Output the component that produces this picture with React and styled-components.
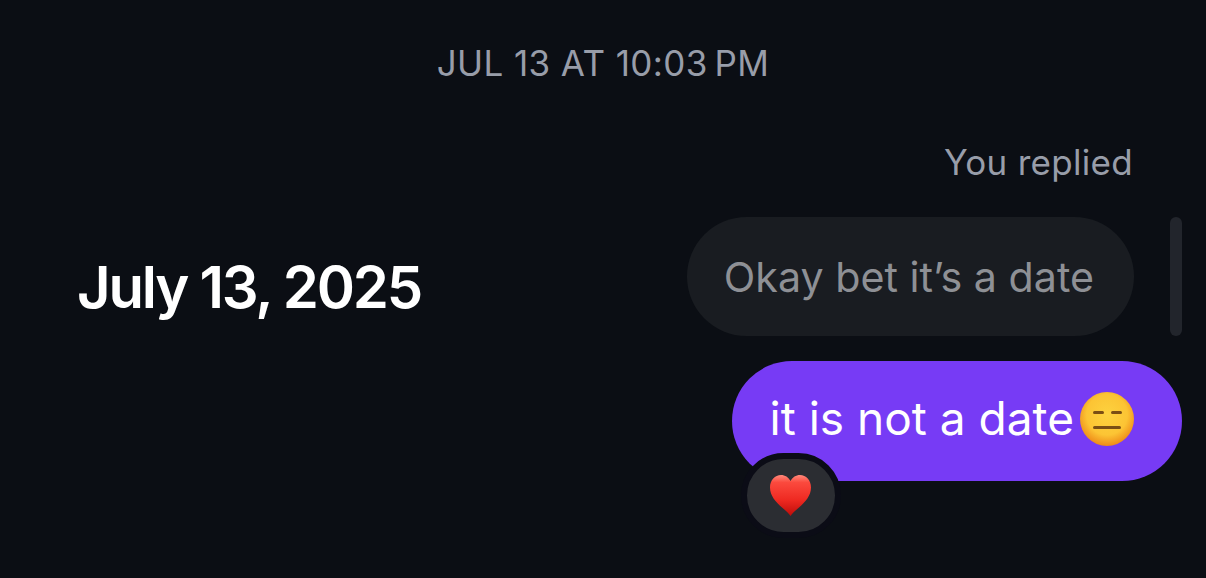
import styled, { createGlobalStyle } from "styled-components";

const GlobalStyle = createGlobalStyle`
  html, body {
    margin: 0;
    padding: 0;
    background: #0b0e14;
  }
  body {
    font-family: "Inter", "Liberation Sans", sans-serif;
    -webkit-font-smoothing: antialiased;
  }
`;

const Page = styled.div`
  width: 1206px;
  height: 578px;
  overflow: hidden;
  background: #0b0e14;
  display: flex;
  flex-direction: column;
  padding: 43px 24px 0 77px;
  box-sizing: border-box;
`;

const Timestamp = styled.div`
  margin-left: -53px;
  text-align: center;
  font-size: 35px;
  line-height: 41px;
  letter-spacing: 0.4px;
  color: #989da9;
`;

const RepliedLabel = styled.div`
  margin-top: 58px;
  padding-right: 49px;
  text-align: right;
  font-size: 35px;
  line-height: 40px;
  letter-spacing: 0.3px;
  color: #989da9;
`;

const QuotedRow = styled.div`
  margin-top: 35px;
  display: flex;
  align-items: center;
  justify-content: space-between;
`;

const DateHeading = styled.h1`
  margin: 21px 0 0;
  font-size: 58px;
  line-height: 64px;
  font-weight: 600;
  letter-spacing: -2.2px;
  color: #ffffff;
`;

const QuotedSide = styled.div`
  display: flex;
  align-items: stretch;
  gap: 36px;
`;

const Bubble = styled.div`
  box-sizing: border-box;
  border-radius: 60px;
  display: flex;
  align-items: center;
  white-space: nowrap;
  height: ${(p) => (p.$mine ? "120px" : "119px")};
  background: ${(p) => (p.$mine ? "#773bf5" : "#191c21")};
  color: ${(p) => (p.$mine ? "#ffffff" : "#8e9095")};
  font-size: ${(p) => (p.$mine ? "46px" : "41.2px")};
  padding: ${(p) => (p.$mine ? "0 48px 6px 38px" : "0 40px 0 37px")};
`;

const ScrollThumb = styled.div`
  width: 12px;
  border-radius: 6px;
  background: #22252c;
`;

const OutgoingRow = styled.div`
  margin-top: 25px;
  display: flex;
  justify-content: flex-end;
`;

const OutgoingWrap = styled.div`
  position: relative;
`;

const Reaction = styled.div`
  position: absolute;
  left: 9px;
  top: 92px;
  width: 100px;
  height: 85px;
  box-sizing: border-box;
  border: 6px solid #0b0c16;
  border-radius: 43px;
  background: #2b2d32;
  display: flex;
  align-items: center;
  justify-content: center;
`;

const FaceIcon = styled.svg`
  flex-shrink: 0;
  margin: 2px 0 0 6px;
`;

const Expressionless = () => (
  <FaceIcon width="54" height="54" viewBox="0 0 54 54">
    <defs>
      <radialGradient id="faceFill" cx="50%" cy="42%" r="58%">
        <stop offset="0%" stopColor="#fdd23f" />
        <stop offset="65%" stopColor="#fcc434" />
        <stop offset="100%" stopColor="#ee8a18" />
      </radialGradient>
    </defs>
    <circle cx="27" cy="27" r="27" fill="url(#faceFill)" />
    <rect x="13" y="19" width="11" height="3" rx="1.5" fill="#7a4e14" />
    <rect x="31" y="19" width="11" height="3" rx="1.5" fill="#7a4e14" />
    <rect x="13" y="34" width="28" height="3" rx="1.5" fill="#7a4e14" />
  </FaceIcon>
);

const Heart = () => (
  <svg width="41" height="41" viewBox="0 0 41 41">
    <defs>
      <linearGradient id="heartFill" x1="0" y1="0" x2="0" y2="1">
        <stop offset="0%" stopColor="#ff8a7c" />
        <stop offset="18%" stopColor="#fb4a3e" />
        <stop offset="60%" stopColor="#ef2a22" />
        <stop offset="100%" stopColor="#bd0d0a" />
      </linearGradient>
    </defs>
    <path
      d="M20.5 41C19 38.5 16 36 12 32.5 6 27 0 21 0 12.5 0 5 5 0 11 0 15 0 18.5 2.2 20.5 6 22.5 2.2 26 0 30 0 36 0 41 5 41 12.5 41 21 35 27 29 32.5 25 36 22 38.5 20.5 41Z"
      fill="url(#heartFill)"
    />
  </svg>
);

export default function App() {
  return (
    <>
      <GlobalStyle />
      <Page>
        <Timestamp>JUL 13 AT 10:03{"\u202f"}PM</Timestamp>
        <RepliedLabel>You replied</RepliedLabel>
        <QuotedRow>
          <DateHeading>July 13, 2025</DateHeading>
          <QuotedSide>
            <Bubble>Okay bet it’s a date</Bubble>
            <ScrollThumb />
          </QuotedSide>
        </QuotedRow>
        <OutgoingRow>
          <OutgoingWrap>
            <Bubble $mine>
              it is not a date
              <Expressionless />
            </Bubble>
            <Reaction>
              <Heart />
            </Reaction>
          </OutgoingWrap>
        </OutgoingRow>
      </Page>
    </>
  );
}
